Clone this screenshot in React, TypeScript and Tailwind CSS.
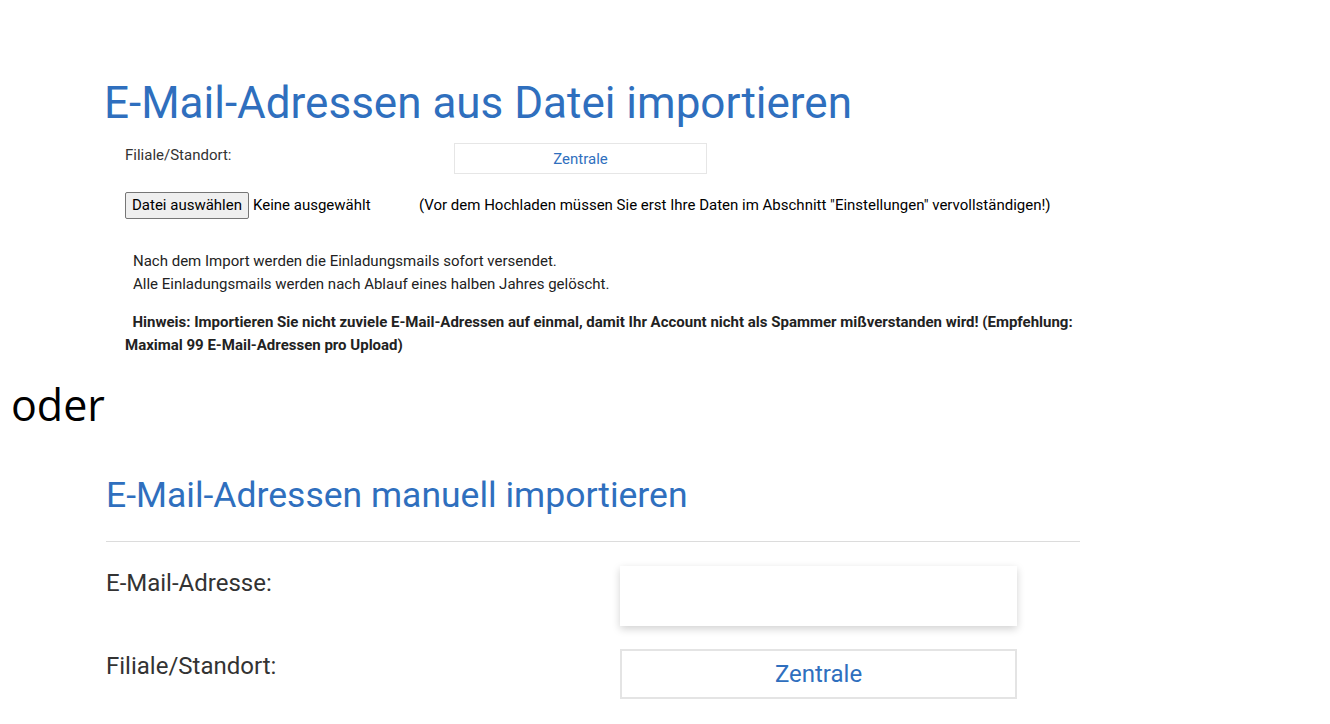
export default function App() {
  return (
    <div className="min-h-screen bg-white font-['Roboto',sans-serif] text-[#333]">
      {/* Datei-Import */}
      <section className="pl-[104px] pt-[76px]">
        <h1 className="text-[44px] leading-[54px] text-[#2f6fbe]">E-Mail-Adressen aus Datei importieren</h1>
        <div className="pl-[21px] pt-[13px] text-[15px]">
          <div className="flex items-start">
            <div className="w-[329px] pt-[1px]">Filiale/Standort:</div>
            <div className="flex h-[31px] w-[253px] items-center justify-center border border-[#e6e6e6] pt-[1px] text-[#2f6fbe]">
              Zentrale
            </div>
          </div>
          <div className="mt-[18px] flex items-center">
            <button className="h-[27px] rounded-[2px] border border-[#767676] bg-[#efefef] px-[6px] text-[15px] text-black">
              Datei auswählen
            </button>
            <span className="ml-[4px] w-[166px] text-black">Keine ausgewählt</span>
            <span className="text-black">
              (Vor dem Hochladen müssen Sie erst Ihre Daten im Abschnitt "Einstellungen" vervollständigen!)
            </span>
          </div>
          <div className="mt-[31px] pl-[8px] leading-[23px] text-[#222]">
            <p>Nach dem Import werden die Einladungsmails sofort versendet.</p>
            <p>Alle Einladungsmails werden nach Ablauf eines halben Jahres gelöscht.</p>
          </div>
          <p className="mt-[15px] w-[965px] font-bold leading-[23px] text-[#222]">
            &nbsp; Hinweis: Importieren Sie nicht zuviele E-Mail-Adressen auf einmal, damit Ihr Account nicht als Spammer mißverstanden wird! (Empfehlung: Maximal 99 E-Mail-Adressen pro Upload)
          </p>
        </div>
      </section>

      <div className="mt-[18px] pl-[11px] font-['Open_Sans',sans-serif] text-[43px] leading-[60px] text-black">oder</div>

      {/* Manuell */}
      <section className="pl-[106px] pt-[36px]">
        <h2 className="text-[35.5px] leading-[48px] text-[#2f6fbe]">E-Mail-Adressen manuell importieren</h2>
        <hr className="mt-[22px] w-[974px] border-t border-[#dcdcdc]" />
        <div className="mt-[24px] w-[974px] text-[24px]">
          <div className="flex items-start">
            <label className="w-[514px] pt-[3px] leading-[28px]">E-Mail-Adresse:</label>
            <input className="h-[60px] w-[397px] bg-white shadow-[0_3px_8px_rgba(0,0,0,0.18)] outline-none" />
          </div>
          <div className="mt-[23px] flex items-start">
            <label className="w-[514px] pt-[3px] leading-[28px]">Filiale/Standort:</label>
            <div className="flex h-[50px] w-[397px] items-center justify-center border-2 border-[#e4e4e4] text-[#2f6fbe]">
              Zentrale
            </div>
          </div>
        </div>
      </section>
    </div>
  );
}
